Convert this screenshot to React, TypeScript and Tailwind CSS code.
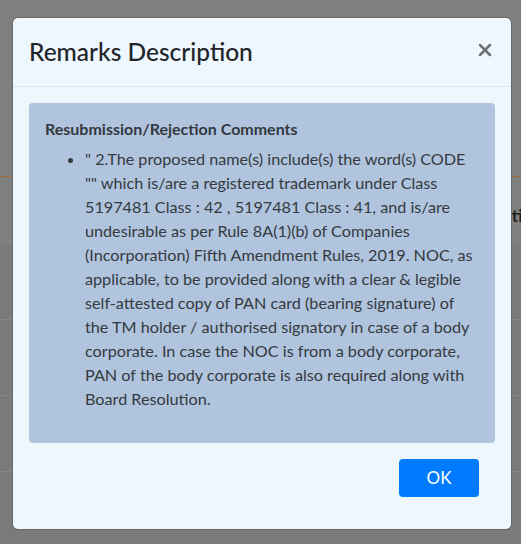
import { X } from 'lucide-react';

// wrapped the same way the original modal wraps it
const commentLines = [
  '" 2.The proposed name(s) include(s) the word(s) CODE',
  '"" which is/are a registered trademark under Class',
  '5197481 Class : 42 , 5197481 Class : 41, and is/are',
  'undesirable as per Rule 8A(1)(b) of Companies',
  '(Incorporation) Fifth Amendment Rules, 2019. NOC, as',
  'applicable, to be provided along with a clear & legible',
  'self-attested copy of PAN card (bearing signature) of',
  'the TM holder / authorised signatory in case of a body',
  'corporate. In case the NOC is from a body corporate,',
  'PAN of the body corporate is also required along with',
  'Board Resolution.',
];

const App = () => {
  return (
    <div
      className="relative w-full h-[544px] overflow-hidden bg-[#7f7f7f]"
      style={{ fontFamily: 'Lato, "Noto Sans", sans-serif' }}
    >
      {/* page behind the backdrop */}
      <div className="h-[176px]" />
      <div className="h-px bg-[#a06a3a]" />
      <div className="h-[68px] pt-[10px] flex items-center pl-[492px] whitespace-nowrap">
        <span className="text-[17px] font-bold text-[#1e1e1e]">Action</span>
      </div>
      <div className="h-[299px] bg-[#7a7a7a] flex flex-col">
        <div className="h-[75px] border-b border-[#868686]" />
        <div className="h-[76px] border-b border-[#868686]" />
        <div className="h-[76px] border-b border-[#868686]" />
      </div>

      {/* modal */}
      <div className="absolute left-[13px] top-[18px] w-[498px] h-[511px] bg-[#eef6fe] rounded-[5px] shadow-[0_0_0_1px_#6a6a6a] flex flex-col">
        <div className="flex items-start justify-between p-4 border-b border-[#dde5ee]">
          <h4 className="text-[24.5px] leading-9 font-medium text-[#212529]">Remarks Description</h4>
          <button className="mt-[6px] mr-0 text-[#707070]">
            <X size={20} strokeWidth={3} />
          </button>
        </div>

        <div className="px-4 pt-4">
          <div className="bg-[#b0c4de] rounded-[4px] p-4 text-[#343a40]">
            <p className="text-[16px] leading-5 font-bold mb-2">Resubmission/Rejection Comments</p>
            <ul className="list-disc pl-10 mb-4 text-[16.2px] leading-6 whitespace-nowrap">
              <li>
                {commentLines.map((line, i) => (
                  <span key={i}>
                    {line}
                    {i < commentLines.length - 1 && <br />}
                  </span>
                ))}
              </li>
            </ul>
          </div>
        </div>

        <div className="flex justify-end px-8 pt-4">
          <button className="w-20 h-[38px] bg-[#007bff] rounded-[4px] text-white text-[17px]">OK</button>
        </div>
      </div>
    </div>
  );
};

export default App;
